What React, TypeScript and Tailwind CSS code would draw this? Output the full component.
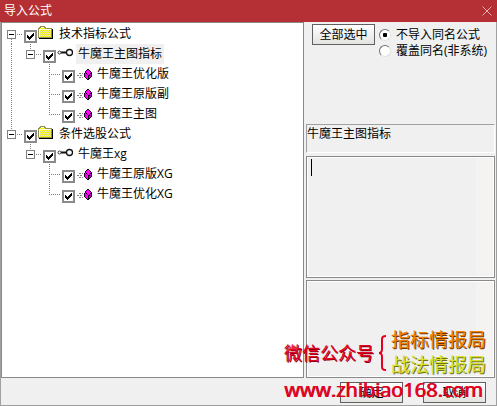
import { useState } from "react";

type NodeKind = "folder" | "group" | "formula";

interface TreeRow {
  id: string;
  label: string;
  kind: NodeKind;
  // one entry per indent column, left to right
  gutters: Gutter[];
}

type Gutter = "blank" | "line" | "tee" | "corner" | "last" | "root-first" | "root-last";

const rows: TreeRow[] = [
  { id: "tech", label: "技术指标公式", kind: "folder", gutters: ["root-first"] },
  { id: "tech-main", label: "牛魔王主图指标", kind: "group", gutters: ["line", "last"] },
  { id: "tech-1", label: "牛魔王优化版", kind: "formula", gutters: ["line", "blank", "tee"] },
  { id: "tech-2", label: "牛魔王原版副", kind: "formula", gutters: ["line", "blank", "tee"] },
  { id: "tech-3", label: "牛魔王主图", kind: "formula", gutters: ["line", "blank", "corner"] },
  { id: "cond", label: "条件选股公式", kind: "folder", gutters: ["root-last"] },
  { id: "cond-xg", label: "牛魔王xg", kind: "group", gutters: ["blank", "last"] },
  { id: "cond-1", label: "牛魔王原版XG", kind: "formula", gutters: ["blank", "blank", "tee"] },
  { id: "cond-2", label: "牛魔王优化XG", kind: "formula", gutters: ["blank", "blank", "corner"] },
];

const dotted = { stroke: "#808080", strokeWidth: 1, strokeDasharray: "1 1", fill: "none" };

function GutterCell({ type }: { type: Gutter }) {
  if (type === "blank") return <span className="w-[19px] shrink-0" />;

  if (type === "line" || type === "tee" || type === "corner") {
    return (
      <svg className="h-5 w-[19px] shrink-0 overflow-visible" viewBox="0 0 19 20" shapeRendering="crispEdges" aria-hidden="true">
        <path d={type === "corner" ? "M9.5 0V11" : "M9.5 0V20"} {...dotted} />
        {type !== "line" && <path d="M11 10.5H21" {...dotted} />}
      </svg>
    );
  }

  return (
    <button type="button" aria-label="折叠" className="h-5 w-[19px] shrink-0">
      <svg className="h-5 w-[19px] overflow-visible" viewBox="0 0 19 20" shapeRendering="crispEdges" aria-hidden="true">
        {type !== "root-first" && <path d="M9.5 0V6" {...dotted} />}
        {type === "root-first" && <path d="M9.5 15V20" {...dotted} />}
        <path d="M15 10.5H21" {...dotted} />
        <rect x="5.5" y="6.5" width="8" height="8" fill="#fff" stroke="#808080" />
        <path d="M7 10.5H12" stroke="#000" />
      </svg>
    </button>
  );
}

function NodeIcon({ kind }: { kind: NodeKind }) {
  return (
    <svg className="h-4 w-4 shrink-0 self-start overflow-visible" viewBox="0 0 16 16" shapeRendering="crispEdges" aria-hidden="true">
      {kind === "folder" && (
        <>
          <defs>
            <pattern id="dither" width="2" height="2" patternUnits="userSpaceOnUse">
              <rect width="2" height="2" fill="#ffff20" />
              <rect width="1" height="1" fill="#d8d8a0" />
              <rect x="1" y="1" width="1" height="1" fill="#d8d8a0" />
            </pattern>
          </defs>
          <path d="M1 4H2V3H3V2H7V3H8V4H15V14H1Z" fill="url(#dither)" />
          <path d="M3 3.5H7M2 5.5H14M2.5 5V13" stroke="#ffffe0" />
          <path d="M1.5 14V4.5H2.5V3.5H3.5V2.5H7.5V3.5H8.5V4.5H14.5V14" stroke="#909058" fill="none" />
          <path d="M1 13.5H15" stroke="#909058" />
          <path d="M15.5 5V15M2 14.5H16" stroke="#000" />
        </>
      )}
      {kind === "group" && (
        <g fill="none" stroke="#111" shapeRendering="auto">
          <circle cx="13.5" cy="8.5" r="3" strokeWidth="1.3" />
          <path d="M5 8.5H10.5" strokeWidth="2" />
          <circle cx="3.5" cy="8.5" r="1.5" stroke="#333" />
        </g>
      )}
      {kind === "formula" && (
        <>
          <path d="M4 9.5H8M2 11.5H8M4 13.5H8" stroke="#808080" strokeDasharray="2 1" />
          <path d="M12 5H14V6H15V7H16V8H17V13H16V14H15V15H14V16H12V15H11V14H10V13H9V9H10V7H11V6H12Z" fill="#200020" />
          <path d="M12 6H14V7H15V8H16V9H15V10H14V11H13V10H12V9H11V8H11V7H12Z" fill="#f0f" />
          <path d="M10 9H11V10H12V11H13V15H12V14H11V13H10Z" fill="#f0f" />
          <path d="M16 10V13H15V14H14V12H15V10Z" fill="#c000c0" />
        </>
      )}
    </svg>
  );
}

function TreeItem({ row, selected, onSelect }: { row: TreeRow; selected: boolean; onSelect: () => void }) {
  return (
    <li className="flex h-5 items-center">
      {row.gutters.map((g, i) => (
        <GutterCell key={i} type={g} />
      ))}
      <span className="mb-px ml-[3px] grid shrink-0 self-end">
        <input
          id={row.id}
          type="checkbox"
          defaultChecked
          className="peer col-start-1 row-start-1 h-[13px] w-[13px] appearance-none border-2 border-[#8a8a8a] bg-white"
        />
        <svg
          className="pointer-events-none invisible col-start-1 row-start-1 h-[13px] w-[13px] peer-checked:visible"
          viewBox="0 0 13 13"
          shapeRendering="crispEdges"
          aria-hidden="true"
        >
          <path d="M3 5H4V6H5V7H6V6H7V5H8V4H9V3H10V6H9V7H8V8H7V9H6V10H5V9H4V8H3Z" fill="#000" />
        </svg>
      </span>
      <NodeIcon kind={row.kind} />
      <label
        htmlFor={row.id}
        onClick={onSelect}
        className={selected ? "ml-1 bg-[#f0f0f0] px-0.5 leading-5" : "ml-1 px-0.5 leading-5"}
      >
        {row.label}
      </label>
    </li>
  );
}

function DialogButton({ children }: { children: string }) {
  return (
    <button
      type="button"
      className="h-[21px] w-[63px] shrink-0 border border-[#606060] bg-linear-to-b from-white to-[#e4e3e0] leading-4"
    >
      {children}
    </button>
  );
}

function Radio({ label, checked, onChange }: { label: string; checked: boolean; onChange: () => void }) {
  return (
    <label className="flex h-4 items-center gap-[5px] whitespace-nowrap">
      <input
        type="radio"
        name="conflict"
        checked={checked}
        onChange={onChange}
        className="h-3 w-3 shrink-0 appearance-none rounded-full border border-t-[#707070] border-r-[#e0e0e0] border-b-[#e0e0e0] border-l-[#707070] bg-white checked:bg-[radial-gradient(circle,#000_2px,#fff_2.5px)]"
      />
      {label}
    </label>
  );
}

function MemoBox({ label, caret }: { label: string; caret?: boolean }) {
  return (
    <div
      className={
        caret
          ? "relative flex h-[122px] shrink-0 border border-[#8a8a8a] bg-white p-px"
          : "relative flex min-h-0 flex-1 border border-[#8a8a8a] bg-white p-px"
      }
    >
      <textarea aria-label={label} readOnly className="min-w-0 flex-1 resize-none bg-[#f0f0f0] outline-none" />
      <div className="w-[17px] bg-[#f4f3f1]" />
      {caret && <span className="absolute top-0.5 left-1 h-[17px] w-px bg-black" />}
    </div>
  );
}

// 水印
function Watermark() {
  return (
    <div className="pointer-events-none absolute right-2.5 bottom-1 w-[203px] whitespace-nowrap">
      <div className="flex items-center gap-1">
        <span className="text-[18px] text-[#e60020] [text-shadow:1px_1px_0_#8c0014]">微信公众号</span>
        <svg className="h-10 w-2 shrink-0" viewBox="0 0 8 40" fill="none" stroke="#e60020" strokeWidth="2" aria-hidden="true">
          <path d="M8 3Q4 3 4 6V16Q4 20 1 20Q4 20 4 24V34Q4 37 8 37" />
        </svg>
        <div className="ml-px text-[19px] leading-[25px]">
          <p className="text-[#f08000] [text-shadow:1px_1px_0_#703800]">指标情报局</p>
          <p className="text-[#d8e030] [text-shadow:1px_1px_0_#707018]">战法情报局</p>
        </div>
      </div>
      <p className="text-[20px] leading-6 text-[#e60020] [text-shadow:1px_0_0_#c0001a]">www.zhibiao168.com</p>
    </div>
  );
}

export default function App() {
  const [selected, setSelected] = useState("tech-main");
  const [mode, setMode] = useState("skip");

  return (
    <div className="relative flex h-screen flex-col bg-[#f0f0f0] font-['Open_Sans','Noto_Sans_CJK_SC',sans-serif] text-[12px] text-black">
      {/* 标题栏 */}
      <header className="flex h-[22px] shrink-0 items-center justify-between bg-[#b43034] px-1 text-white">
        <h1 className="leading-5">导入公式</h1>
        <button type="button" aria-label="关闭" className="mr-px">
          <svg className="h-[10px] w-[10px]" viewBox="0 0 10 10" stroke="#e8b0b0" aria-hidden="true">
            <path d="M0.5 0.5L9.5 9.5M9.5 0.5L0.5 9.5" />
          </svg>
        </button>
      </header>

      <div className="flex min-h-0 flex-1 flex-col border-x border-b border-[#a0a0a0]">
        <main className="flex min-h-0 flex-1">
          {/* 公式树 */}
          <ul className="min-w-0 flex-1 border border-[#8a8a8a] bg-white pt-px">
            {rows.map((row) => (
              <TreeItem key={row.id} row={row} selected={selected === row.id} onSelect={() => setSelected(row.id)} />
            ))}
          </ul>

          {/* 选项 */}
          <section className="flex w-[192px] shrink-0 flex-col pr-px pl-0.5">
            <div className="flex h-[102px] shrink-0 gap-1 pt-0.5 pl-1.5">
              <DialogButton>全部选中</DialogButton>
              <div className="pt-[3px]">
                <Radio label="不导入同名公式" checked={mode === "skip"} onChange={() => setMode("skip")} />
                <Radio label="覆盖同名(非系统)" checked={mode === "cover"} onChange={() => setMode("cover")} />
              </div>
            </div>
            <p className="mb-[3px] h-[29px] shrink-0 border border-t-[#a0a0a0] border-r-white border-b-white border-l-[#a0a0a0] leading-[18px]">
              牛魔王主图指标
            </p>
            <div className="flex min-h-0 flex-1 flex-col gap-0.5">
              <MemoBox label="公式说明" caret />
              <MemoBox label="导入信息" />
            </div>
          </section>
        </main>

        <footer className="flex h-[27px] shrink-0 justify-end gap-5 pt-1 pr-2.5">
          <DialogButton>确定</DialogButton>
          <DialogButton>取消</DialogButton>
        </footer>
      </div>

      <Watermark />
    </div>
  );
}
